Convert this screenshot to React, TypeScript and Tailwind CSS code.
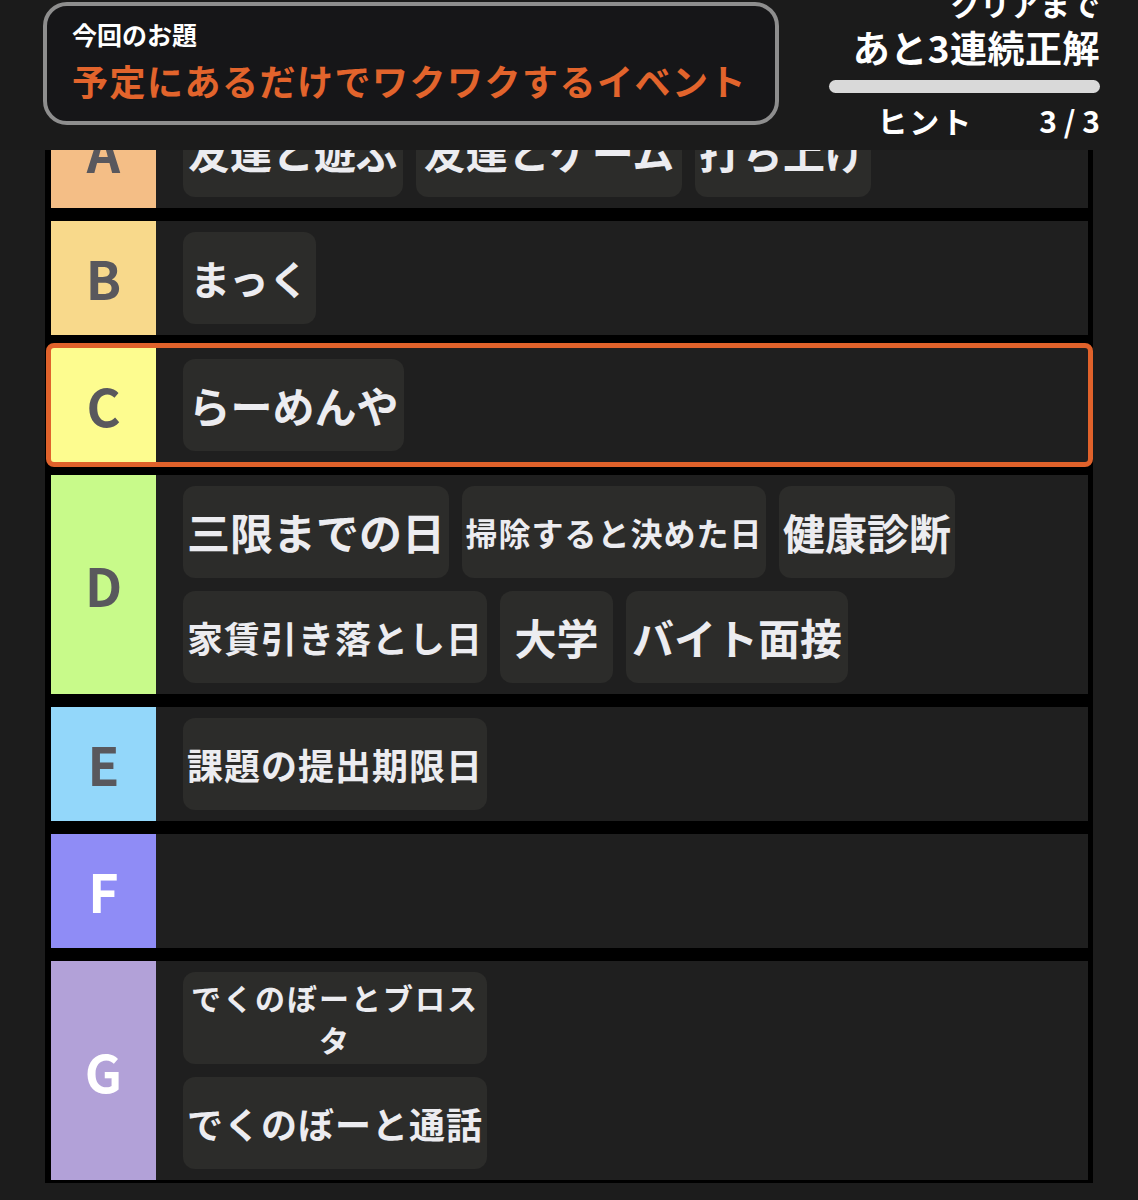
import React from 'react'

type Chip = { text: string; w: string; size: string; wrap?: boolean }

type Tier = {
  label: string
  bg: string
  fg: string
  chips: Chip[]
  selected?: boolean
  stacked?: boolean
}

const TIERS: Tier[] = [
  {
    label: 'A',
    bg: 'bg-[#f4be86]',
    fg: 'text-[#59585d]',
    chips: [
      { text: '友達と遊ぶ', w: 'w-[220px]', size: 'text-[42px]' },
      { text: '友達とゲーム', w: 'w-[266px]', size: 'text-[42px]' },
      { text: '打ち上げ', w: 'w-[176px]', size: 'text-[42px]' },
    ],
  },
  {
    label: 'B',
    bg: 'bg-[#f8d98b]',
    fg: 'text-[#59585d]',
    chips: [{ text: 'まっく', w: 'w-[133px]', size: 'text-[40px]' }],
  },
  {
    label: 'C',
    bg: 'bg-[#fdfc8f]',
    fg: 'text-[#59585d]',
    selected: true,
    chips: [{ text: 'らーめんや', w: 'w-[221px]', size: 'text-[42px]' }],
  },
  {
    label: 'D',
    bg: 'bg-[#c8fa8a]',
    fg: 'text-[#59585d]',
    chips: [
      { text: '三限までの日', w: 'w-[266px]', size: 'text-[43px]' },
      { text: '掃除すると決めた日', w: 'w-[304px]', size: 'text-[32px] tracking-[1px]' },
      { text: '健康診断', w: 'w-[176px]', size: 'text-[42px]' },
      { text: '家賃引き落とし日', w: 'w-[304px]', size: 'text-[36px] tracking-[1px]' },
      { text: '大学', w: 'w-[113px]', size: 'text-[42px]' },
      { text: 'バイト面接', w: 'w-[222px]', size: 'text-[42px]' },
    ],
  },
  {
    label: 'E',
    bg: 'bg-[#93d7fa]',
    fg: 'text-[#59585d]',
    chips: [{ text: '課題の提出期限日', w: 'w-[304px]', size: 'text-[36px] tracking-[1px]' }],
  },
  {
    label: 'F',
    bg: 'bg-[#8f8cf6]',
    fg: 'text-white',
    chips: [],
  },
  {
    label: 'G',
    bg: 'bg-[#b2a1d8]',
    fg: 'text-white',
    stacked: true,
    chips: [
      { text: 'でくのぼーとブロスタ', w: 'w-[304px]', size: 'text-[30px] tracking-[2px] leading-[42px]', wrap: true },
      { text: 'でくのぼーと通話', w: 'w-[304px]', size: 'text-[36px] tracking-[1px]' },
    ],
  },
]

function TierRow({ tier }: { tier: Tier }) {
  return (
    <div
      className={
        'flex min-h-[114px] ' +
        (tier.selected ? 'outline-[5px] outline-solid outline-[#e0622b] rounded-[3px]' : '')
      }
    >
      <div className={`w-[105px] shrink-0 flex items-center justify-center ${tier.bg}`}>
        <span className={`text-[52px] font-bold leading-none ${tier.fg}`}>{tier.label}</span>
      </div>
      <div
        className={
          'flex-1 bg-[#1f1f1f] pl-[27px] pr-4 py-[11px] flex gap-[13px] ' +
          (tier.stacked ? 'flex-col items-start' : 'flex-wrap content-start')
        }
      >
        {tier.chips.map((c) => (
          <div
            key={c.text}
            className={`${c.w} h-[92px] rounded-[12px] bg-[#2c2c2a] flex items-center justify-center text-center px-[6px]`}
          >
            <span
              className={`${c.size} font-bold text-[#ececf0] ${c.wrap ? 'whitespace-normal' : 'whitespace-nowrap leading-tight'}`}
            >
              {c.text}
            </span>
          </div>
        ))}
      </div>
    </div>
  )
}

export default function App() {
  return (
    <div
      className="w-[1138px] h-[1200px] overflow-hidden bg-[#1c1c1c] text-white"
      style={{ fontFamily: '"Noto Sans CJK JP", "Noto Sans", sans-serif' }}
    >
      <header className="relative z-10 h-[150px] bg-[#1b1b1b] flex justify-between items-start">
        <div className="ml-[43px] mt-[2px] w-[736px] h-[123px] border-4 border-[#8e8e8e] rounded-[24px] bg-[#161618] pl-[25px] pr-2 pt-[12px]">
          <p className="text-[25px] font-bold leading-[32px]">今回のお題</p>
          <p className="text-[36px] font-bold leading-[48px] tracking-[1.5px] whitespace-nowrap text-[#e2642c] mt-[6px]">
            予定にあるだけでワクワクするイベント
          </p>
        </div>
        <div className="mr-[38px] w-[271px] flex flex-col items-end">
          <p className="text-[30px] font-bold leading-[30px] -mt-[12px]">クリアまで</p>
          <p className="text-[37px] font-bold leading-[40px] tracking-[0.5px] mt-[9px]">あと3連続正解</p>
          <div className="w-full h-[13px] rounded-full bg-[#d9d9d9] mt-[13px]" />
          <div className="flex items-center gap-[66px] mt-[9px] text-[30px] font-bold leading-[36px]">
            <span className="tracking-[2px]">ヒント</span>
            <span>3 / 3</span>
          </div>
        </div>
      </header>

      {/* Tier list, scrolled under the header */}
      <div className="h-[1050px] overflow-hidden">
        <div className="-mt-[56px] mx-[45px] bg-black pl-[6px] pr-[5px] pb-[3px] flex flex-col gap-[13px]">
          {TIERS.map((t) => (
            <TierRow key={t.label} tier={t} />
          ))}
        </div>
      </div>
    </div>
  )
}
